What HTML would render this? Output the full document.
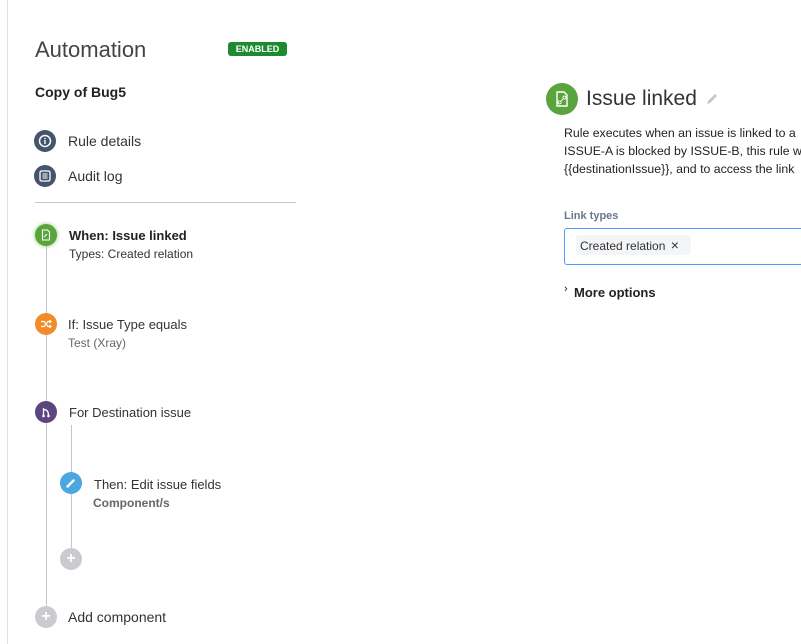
<!DOCTYPE html>
<html><head><style>
body{margin:0;width:801px;height:644px;background:#fff;font-family:"Liberation Sans",sans-serif;color:#333;position:relative;overflow:hidden}
.a{position:absolute;white-space:nowrap}
.c{position:absolute;border-radius:50%;display:flex;align-items:center;justify-content:center}
.t{font-size:14px;color:#333}
</style></head><body>
<div class="a" style="left:7px;top:0;width:1px;height:644px;background:#dfe1e6"></div>
<div class="a" style="left:35px;top:37px;font-size:22px;color:#444">Automation</div>
<div class="a" style="left:228px;top:42px;width:59px;height:14px;background:#1e8a2f;border-radius:3px;color:#fff;font-size:9px;font-weight:bold;text-align:center;line-height:14px">ENABLED</div>
<div class="a" style="left:35px;top:84px;font-size:14px;font-weight:bold;color:#222">Copy of Bug5</div>

<div class="c" style="left:34px;top:130px;width:22px;height:22px;background:#44546f"><svg width="14" height="14" viewBox="0 0 14 14"><circle cx="7" cy="7" r="5.5" fill="none" stroke="#fff" stroke-width="1.5"/><rect x="6.3" y="6" width="1.4" height="4" fill="#fff"/><rect x="6.3" y="3.8" width="1.4" height="1.4" fill="#fff"/></svg></div>
<div class="a t" style="left:68px;top:133px">Rule details</div>
<div class="c" style="left:34px;top:165px;width:22px;height:22px;background:#44546f"><svg width="14" height="14" viewBox="0 0 14 14"><rect x="2" y="2" width="10" height="10" rx="1.5" fill="none" stroke="#fff" stroke-width="1.3"/><path d="M4.5 5h5M4.5 7h5M4.5 9h5" stroke="#fff" stroke-width="1"/></svg></div>
<div class="a t" style="left:68px;top:168px">Audit log</div>
<div class="a" style="left:35px;top:202px;width:261px;height:1px;background:#c1c7d0"></div>

<div class="a" style="left:46px;top:246px;width:1px;height:372px;background:#c1c7d0"></div>
<div class="a" style="left:71px;top:425px;width:1px;height:135px;background:#c1c7d0"></div>

<div class="c" style="left:35px;top:224px;width:22px;height:22px;background:#5aa43e;box-shadow:0 0 4px #8bc56f"><svg width="12" height="12" viewBox="0 0 12 12"><path d="M2.5 1h5l2 2v8h-7z" fill="none" stroke="#fff" stroke-width="1.1"/><path d="M4 8l3-3" stroke="#fff" stroke-width="1"/></svg></div>
<div class="a" style="left:69px;top:228px;font-size:13px;font-weight:bold;color:#222">When: Issue linked</div>
<div class="a" style="left:69px;top:247px;font-size:12px;color:#333">Types: Created relation</div>

<div class="c" style="left:35px;top:313px;width:22px;height:22px;background:#f28c2b"><svg width="12" height="10" viewBox="0 0 12 10"><path d="M1 2.5h3l4 5h3M1 7.5h3l4-5h3M9.5 1l1.5 1.5-1.5 1.5M9.5 6l1.5 1.5-1.5 1.5" fill="none" stroke="#fff" stroke-width="1.2"/></svg></div>
<div class="a" style="left:68px;top:317px;font-size:13px;color:#333">If: Issue Type equals</div>
<div class="a" style="left:68px;top:336px;font-size:12px;color:#666">Test (Xray)</div>

<div class="c" style="left:35px;top:401px;width:22px;height:22px;background:#5c4580"><svg width="12" height="12" viewBox="0 0 12 12"><path d="M3.5 2v8M3.5 3.5c4 0 5 3 5 6" fill="none" stroke="#fff" stroke-width="1.3"/><circle cx="3.5" cy="10" r="1.3" fill="#fff"/><circle cx="8.5" cy="10" r="1.3" fill="#fff"/></svg></div>
<div class="a" style="left:69px;top:405px;font-size:13px;color:#333">For Destination issue</div>

<div class="c" style="left:60px;top:472px;width:22px;height:22px;background:#4ba7e0"><svg width="12" height="12" viewBox="0 0 12 12"><path d="M2.5 9.5l6-6" stroke="#fff" stroke-width="2.4" stroke-linecap="round"/></svg></div>
<div class="a" style="left:94px;top:477px;font-size:13px;color:#333">Then: Edit issue fields</div>
<div class="a" style="left:93px;top:496px;font-size:12px;font-weight:bold;color:#666">Component/s</div>

<div class="c" style="left:60px;top:548px;width:22px;height:22px;background:#c9cbcf;color:#fff;font-size:16px;font-weight:bold">+</div>
<div class="c" style="left:35px;top:606px;width:22px;height:22px;background:#c9cbcf;color:#fff;font-size:16px;font-weight:bold">+</div>
<div class="a" style="left:68px;top:609px;font-size:14px;color:#333">Add component</div>

<div class="c" style="left:546px;top:83px;width:32px;height:32px;background:#5aa43e"><svg width="18" height="18" viewBox="0 0 18 18"><path d="M4 2h7l3 3v11H4z" fill="none" stroke="#fff" stroke-width="1.4"/><path d="M7 12l4-4M6.5 10.5l-1 1a1.4 1.4 0 002 2l1-1M11.5 9.5l1-1a1.4 1.4 0 00-2-2l-1 1" fill="none" stroke="#fff" stroke-width="1"/></svg></div>
<div class="a" style="left:586px;top:87px;font-size:21px;color:#333">Issue linked</div>
<svg class="a" style="left:705px;top:92px" width="14" height="14" viewBox="0 0 14 14"><path d="M2 12l1-3 7-7 2 2-7 7z" fill="#c1c7d0"/></svg>
<div class="a" style="left:564px;top:124px;font-size:12.3px;line-height:18px;color:#222">Rule executes when an issue is linked to a<br>ISSUE-A is blocked by ISSUE-B, this rule w<br>{{destinationIssue}}, and to access the link</div>
<div class="a" style="left:564px;top:210px;font-size:11px;font-weight:bold;color:#6b778c">Link types</div>
<div class="a" style="left:564px;top:228px;width:250px;height:35px;border:1px solid #4c9aff;border-radius:3px"></div>
<div class="a" style="left:576px;top:235px;width:115px;height:20px;background:#f4f5f7;border-radius:3px"></div>
<div class="a" style="left:580px;top:237px;font-size:12px;color:#333">Created relation <span style="font-size:14px;margin-left:2px">×</span></div>
<div class="a" style="left:564px;top:283px;font-size:11px;color:#222">›</div>
<div class="a" style="left:574px;top:285px;font-size:13px;font-weight:bold;color:#222">More options</div>
</body></html>
